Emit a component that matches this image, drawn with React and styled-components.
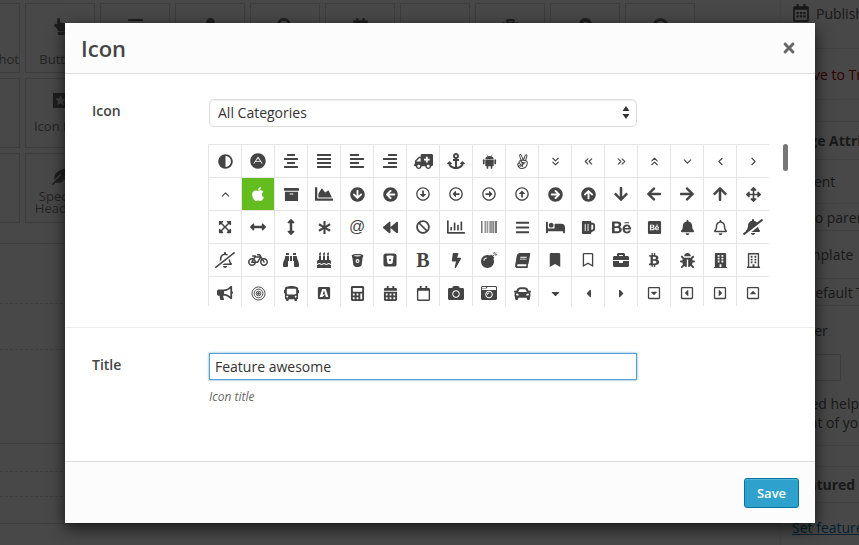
import React from "react";
import styled, { createGlobalStyle } from "styled-components";
import {
  FaAdjust, FaAdn, FaAlignCenter, FaAlignJustify, FaAlignLeft, FaAlignRight, FaAmbulance, FaAnchor,
  FaAngellist, FaApple, FaArchive, FaChartArea, FaArrowCircleDown, FaArrowCircleLeft,
  FaRegArrowAltCircleDown, FaRegArrowAltCircleLeft, FaRegArrowAltCircleRight, FaRegArrowAltCircleUp,
  FaArrowCircleRight, FaArrowCircleUp, FaArrowDown, FaArrowLeft, FaArrowRight, FaArrowUp, FaArrowsAlt,
  FaExpandArrowsAlt, FaArrowsAltH, FaArrowsAltV, FaAsterisk, FaBackward, FaBan, FaRegChartBar,
  FaBarcode, FaBars, FaBed, FaBeer, FaBehance, FaBehanceSquare, FaBell, FaRegBell, FaBellSlash,
  FaRegBellSlash, FaBicycle, FaBinoculars, FaBirthdayCake, FaBolt, FaBomb, FaBook, FaBookmark,
  FaRegBookmark, FaBriefcase, FaBtc, FaBug, FaBuilding, FaRegBuilding, FaBullhorn, FaBus,
  FaBuysellads, FaCalculator, FaCalendarAlt, FaRegCalendar, FaCamera, FaCameraRetro, FaCar, FaCaretDown,
  FaCaretLeft, FaCaretRight, FaRegCaretSquareDown, FaRegCaretSquareLeft, FaRegCaretSquareRight,
  FaRegCaretSquareUp, FaTimes, FaHandPointUp, FaFeatherAlt, FaSearch, FaUser, FaSuitcase,
  FaMapMarkerAlt, FaRegCalendarAlt, FaQuestionCircle,
} from "react-icons/fa";
import {
  FiChevronDown, FiChevronLeft, FiChevronRight, FiChevronUp, FiChevronsDown, FiChevronsLeft,
  FiChevronsRight, FiChevronsUp,
} from "react-icons/fi";

const Glyph = styled.span`
  font-family: ${(p) => p.$font};
  font-weight: ${(p) => p.$weight};
  font-size: ${(p) => p.$size}px;
  line-height: 1;
`;

const BoldGlyph = () => (
  <Glyph $font={'"Liberation Serif", serif'} $weight={700} $size={20}>B</Glyph>
);

const AtGlyph = () => (
  <Glyph $font={'"Liberation Sans", sans-serif'} $weight={400} $size={16}>@</Glyph>
);

const Android = ({ size }) => (
  <svg width={size} height={size} viewBox="0 0 16 16" fill="currentColor">
    <path d="M3.500 5.200C3.700 3.300 5.500 2 8 2s4.300 1.300 4.500 3.200z" />
    <path d="M5 .5l1.300 2M11 .5L9.700 2.500" stroke="currentColor" strokeWidth=".6" />
    <path d="M3.500 5.900h9v6.300c0 .5-.4.9-.9.9H11v2c0 1-1.700 1-1.700 0v-2H6.700v2c0 1-1.700 1-1.700 0v-2h-.6c-.5 0-.9-.4-.9-.9z" />
    <rect x="1" y="5.700" width="1.800" height="5.200" rx=".9" />
    <rect x="13.200" y="5.700" width="1.800" height="5.200" rx=".9" />
  </svg>
);

const Bullseye = ({ size }) => (
  <svg width={size} height={size} viewBox="0 0 16 16" fill="none" stroke="currentColor" strokeWidth="1">
    <circle cx="8" cy="8" r="7" />
    <circle cx="8" cy="8" r="4.700" />
    <circle cx="8" cy="8" r="2.500" />
    <circle cx="8" cy="8" r="1" fill="currentColor" />
  </svg>
);

const Bitbucket = ({ size }) => (
  <svg width={size} height={size} viewBox="0 0 16 16" fill="currentColor">
    <path d="M2 2.200C3.500.6 12.500.6 14 2.200c.4.5-.3 1.900-.6 3.300l-1 7.200c-.2 1.300-2.500 2.300-4.400 2.300s-4.200-1-4.400-2.300l-1-7.200C2.300 4.100 1.600 2.700 2 2.200zM4 3c1.500.8 6.500.8 8 0-1.500-.7-6.500-.7-8 0z" />
    <circle cx="8" cy="8.500" r="2.100" fill="#fff" />
    <circle cx="8" cy="8.500" r=".9" />
  </svg>
);

const BitbucketSquare = ({ size }) => (
  <svg width={size} height={size} viewBox="0 0 16 16" fill="currentColor">
    <rect x=".5" y=".5" width="15" height="15" rx="3" />
    <path d="M4 3.500c1.500-.8 6.500-.8 8 0l-1 8c-.2.800-1.500 1.200-3 1.200s-2.800-.4-3-1.200z" fill="#fff" />
    <circle cx="8" cy="8" r="1.200" />
  </svg>
);

const StarBox = ({ size }) => (
  <svg width={size} height={size} viewBox="0 0 16 16">
    <rect width="16" height="16" fill="currentColor" />
    <path d="M8 2.500l1.700 3.600 3.900.5-2.900 2.700.8 3.900L8 10.800l-3.500 1.900.8-3.900-2.900-2.700 3.900-.5z" fill="#ddd" />
  </svg>
);

const FLIP = "scaleX(-1)";

const ICONS = [
  [FaAdjust, 15], [FaAdn, 16], [FaAlignCenter, 16], [FaAlignJustify, 16], [FaAlignLeft, 16], [FaAlignRight, 16], [FaAmbulance, 19, FLIP], [FaAnchor, 18], [Android, 15], [FaAngellist, 15], [FiChevronsDown, 13], [FiChevronsLeft, 13], [FiChevronsRight, 13], [FiChevronsUp, 13], [FiChevronDown, 13], [FiChevronLeft, 13], [FiChevronRight, 13],
  [FiChevronUp, 13], [FaApple, 16], [FaArchive, 15], [FaChartArea, 18], [FaArrowCircleDown, 15], [FaArrowCircleLeft, 15], [FaRegArrowAltCircleDown, 14], [FaRegArrowAltCircleLeft, 14], [FaRegArrowAltCircleRight, 14], [FaRegArrowAltCircleUp, 14], [FaArrowCircleRight, 15], [FaArrowCircleUp, 15], [FaArrowDown, 16], [FaArrowLeft, 16], [FaArrowRight, 16], [FaArrowUp, 16], [FaArrowsAlt, 15],
  [FaExpandArrowsAlt, 14], [FaArrowsAltH, 16], [FaArrowsAltV, 16], [FaAsterisk, 13], [AtGlyph, 14], [FaBackward, 15], [FaBan, 14], [FaRegChartBar, 18], [FaBarcode, 16], [FaBars, 15], [FaBed, 19], [FaBeer, 15], [FaBehance, 19], [FaBehanceSquare, 15], [FaBell, 15], [FaRegBell, 15], [FaBellSlash, 20, FLIP],
  [FaRegBellSlash, 20, FLIP], [FaBicycle, 20], [FaBinoculars, 16], [FaBirthdayCake, 16], [Bitbucket, 15], [BitbucketSquare, 14], [BoldGlyph, 14], [FaBolt, 15], [FaBomb, 16], [FaBook, 15, "skewX(-10deg)"], [FaBookmark, 14], [FaRegBookmark, 14], [FaBriefcase, 16], [FaBtc, 14], [FaBug, 15], [FaBuilding, 15], [FaRegBuilding, 15],
  [FaBullhorn, 16], [Bullseye, 15], [FaBus, 15], [FaBuysellads, 14], [FaCalculator, 15], [FaCalendarAlt, 15], [FaRegCalendar, 15], [FaCamera, 16], [FaCameraRetro, 16], [FaCar, 17], [FaCaretDown, 13], [FaCaretLeft, 13], [FaCaretRight, 13], [FaRegCaretSquareDown, 14], [FaRegCaretSquareLeft, 14], [FaRegCaretSquareRight, 14], [FaRegCaretSquareUp, 14],
];

const TILE_ROWS = [
  {
    gap: 18,
    tiles: [
      { name: "Screenshot", nudge: 16 }, { Icon: FaHandPointUp, name: "Button" }, { Icon: FaAlignJustify },
      { Icon: FaUser }, { Icon: FaSearch }, { Icon: FaRegCalendarAlt },
      {}, { Icon: FaSuitcase }, { Icon: FaMapMarkerAlt }, { Icon: FaQuestionCircle },
    ],
  },
  { gap: 12, tiles: [{}, { Icon: StarBox, name: "Icon Box", size: 15 }] },
  { gap: 5, tiles: [{}, { Icon: FaFeatherAlt, name: "Special Heading" }] },
];

const BANDS = [
  { h: 20, line: "solid" }, { h: 59, line: "dashed" }, { h: 45, line: "dashed" }, { h: 93, line: "solid" },
  { h: 27, line: "dashed" }, { h: 24, line: "dashed" }, { h: 26, line: "solid" },
];

const GlobalStyle = createGlobalStyle`
  html, body {
    margin: 0;
    height: 100%;
    overflow: hidden;
    background: #f1f1f1;
    font-family: "Open Sans", "Liberation Sans", sans-serif;
  }
`;

const Page = styled.div`
  position: relative;
  width: 859px;
  height: 545px;
  overflow: hidden;
  display: flex;
`;

const Main = styled.main`
  flex: 1;
  min-width: 0;
  overflow: hidden;
`;

const TileRows = styled.div`
  display: flex;
  flex-direction: column;
  gap: 5px;
  margin: 3px 0 0 -50px;
`;

const TileRow = styled.div`
  display: flex;
  gap: 5px;
`;

const Tile = styled.div`
  width: 70px;
  height: 70px;
  flex: none;
  box-sizing: border-box;
  border: 1px solid #ccc;
  padding: 14px ${(p) => p.$nudge || 0}px 0 0;
  text-align: center;
  font-size: 13px;
  line-height: 12px;
  color: #777;
  svg {
    display: block;
    margin: 0 auto ${(p) => p.$gap}px;
    color: #666;
  }
`;

const TileSpacer = styled.div`
  height: 17px;
  margin-bottom: ${(p) => p.$gap}px;
`;

const Band = styled.div`
  height: ${(p) => p.$h}px;
  border-bottom: 1px ${(p) => p.$line} #ccc;
`;

const Sidebar = styled.aside`
  width: 79px;
  flex: none;
  box-sizing: border-box;
  border-left: 1px solid #e5e5e5;
  font-size: 14px;
  line-height: 19px;
  white-space: nowrap;
  overflow: hidden;
  color: #555;
`;

const SideRow = styled.div`
  height: ${(p) => p.$h}px;
  padding-left: ${(p) => p.$indent || 11}px;
  display: flex;
  align-items: ${(p) => (p.$top ? "flex-start" : "center")};
  gap: 6px;
  box-sizing: border-box;
  border-bottom: ${(p) => (p.$line ? "1px solid #ddd" : "none")};
  font-weight: ${(p) => (p.$bold ? 700 : 400)};
  color: ${(p) => p.$color || "inherit"};
  text-decoration: ${(p) => (p.$link ? "underline" : "none")};
  svg {
    flex: none;
  }
`;

const OrderBox = styled.div`
  width: 49px;
  height: 27px;
  border: 1px solid #ccc;
  box-sizing: border-box;
`;

const Overlay = styled.div`
  position: absolute;
  inset: 0;
  background: rgba(0, 0, 0, 0.7);
`;

const Modal = styled.div`
  position: absolute;
  left: 65px;
  top: 23px;
  width: 750px;
  height: 500px;
  display: flex;
  flex-direction: column;
  background: #fff;
  box-shadow: 0 5px 15px rgba(0, 0, 0, 0.7);
`;

const Header = styled.header`
  height: 50px;
  flex: none;
  padding: 0 18px 0 16px;
  display: flex;
  align-items: center;
  justify-content: space-between;
  background: #fcfcfc;
  border-bottom: 1px solid #ddd;
`;

const Title = styled.h1`
  margin: 0;
  font-size: 22px;
  line-height: 50px;
  font-weight: 600;
  color: #444;
`;

const CloseButton = styled.button`
  padding: 0;
  border: 0;
  background: none;
  color: #666;
  display: flex;
`;

const FormRow = styled.section`
  height: ${(p) => p.$h}px;
  flex: none;
  box-sizing: border-box;
  padding: 25px 0 0 27px;
  display: grid;
  grid-template-columns: 117px 1fr;
  border-bottom: ${(p) => (p.$line ? "1px solid #eee" : "none")};
`;

const Label = styled.label`
  font-size: 14px;
  line-height: 24px;
  font-weight: 600;
  color: #444;
`;

const SelectWrap = styled.div`
  position: relative;
  width: 428px;
  height: 28px;
`;

const Select = styled.select`
  appearance: none;
  width: 100%;
  height: 100%;
  padding: 0 8px 2px;
  box-sizing: border-box;
  border: 1px solid #ddd;
  border-radius: 5px;
  box-shadow: inset 0 1px 2px rgba(0, 0, 0, 0.07);
  background: #fff;
  font: 14px "Open Sans", sans-serif;
  color: #333;
`;

const SelectArrows = styled.svg`
  position: absolute;
  right: 7px;
  top: 7px;
  pointer-events: none;
`;

const ListWrap = styled.div`
  position: relative;
  width: 561px;
  margin-top: 17px;
  margin-left: -1px;
`;

const IconList = styled.div`
  height: 162px;
  overflow: hidden;
`;

const IconGrid = styled.div`
  display: grid;
  grid-template-columns: repeat(17, 33px);
  grid-auto-rows: 33px;
  border-left: 1px solid #e5e5e5;
  border-top: 1px solid #e5e5e5;
`;

const IconCell = styled.div`
  display: flex;
  align-items: center;
  justify-content: center;
  box-sizing: border-box;
  border-right: 1px solid #e5e5e5;
  border-bottom: 1px solid #e5e5e5;
  color: ${(p) => (p.$selected ? "#fff" : "#444")};
  background: ${(p) => (p.$selected ? "#64bd1e" : "#fff")};
  svg {
    transform: ${(p) => p.$tf || "none"};
  }
`;

const ScrollThumb = styled.div`
  position: absolute;
  left: 575px;
  top: 0;
  width: 5px;
  height: 27px;
  border-radius: 3px;
  background: #777;
`;

const TextInput = styled.input`
  display: block;
  width: 428px;
  height: 27px;
  padding: 0 5px;
  box-sizing: border-box;
  border: 1px solid #5b9dd9;
  box-shadow: 0 0 2px rgba(30, 140, 190, 0.8);
  outline: none;
  font: 14px "Open Sans", sans-serif;
  color: #333;
`;

const Hint = styled.p`
  margin: 8px 0 0;
  font-size: 12px;
  line-height: 17px;
  font-style: italic;
  color: #666;
`;

const Footer = styled.footer`
  flex: 1;
  padding: 0 16px;
  display: flex;
  align-items: center;
  justify-content: flex-end;
  background: #fcfcfc;
  border-top: 1px solid #ddd;
`;

const SaveButton = styled.button`
  width: 55px;
  height: 30px;
  padding: 0;
  border: 1px solid #0074a2;
  border-radius: 3px;
  background: #2ea2cc;
  box-shadow: inset 0 1px 0 rgba(120, 200, 230, 0.5);
  color: #fff;
  font: 600 13px "Open Sans", sans-serif;
`;

export default function App() {
  return (
    <Page>
      <GlobalStyle />
      <Main>
        <TileRows>
          {TILE_ROWS.map((row, r) => (
            <TileRow key={r}>
              {row.tiles.map(({ Icon, name, size, nudge }, i) => (
                <Tile key={i} $gap={row.gap} $nudge={nudge}>
                  {Icon ? <Icon size={size || 17} /> : <TileSpacer $gap={row.gap} />}
                  {name}
                </Tile>
              ))}
            </TileRow>
          ))}
        </TileRows>
        {BANDS.map((b, i) => (
          <Band key={i} $h={b.h} $line={b.line} />
        ))}
      </Main>
      <Sidebar>
        <SideRow $h={26}>
          <FaRegCalendarAlt size={18} />
          Publish
        </SideRow>
        <SideRow $h={23} $line />
        <SideRow $h={51} $line $color="#a00">Move to Trash</SideRow>
        <SideRow $h={22} $line />
        <SideRow $h={38} $line $bold>Page Attributes</SideRow>
        <SideRow $h={44} $line>Parent</SideRow>
        <SideRow $h={27} $line $indent={21}>(no parent)</SideRow>
        <SideRow $h={48} $line>Template</SideRow>
        <SideRow $h={27} $line $indent={24}>Default Template</SideRow>
        <SideRow $h={48} $indent={8}>Order</SideRow>
        <SideRow $h={39} $top><OrderBox /></SideRow>
        <SideRow $h={20}>Need help? Use the Help tab</SideRow>
        <SideRow $h={33} $line $top>right of your screen.</SideRow>
        <SideRow $h={21} $line />
        <SideRow $h={36} $line $bold>Featured Image</SideRow>
        <SideRow $h={48} $link $color="#0074a2">Set featured image</SideRow>
      </Sidebar>
      <Overlay />
      <Modal>
        <Header>
          <Title>Icon</Title>
          <CloseButton aria-label="Close">
            <FaTimes size={16} />
          </CloseButton>
        </Header>
        <FormRow $h={254} $line>
          <Label>Icon</Label>
          <div>
            <SelectWrap>
              <Select defaultValue="all">
                <option value="all">All Categories</option>
              </Select>
              <SelectArrows width="8" height="13" viewBox="0 0 8 13" fill="#333">
                <path d="M4 0l3.500 5h-7zM4 13L.5 8h7z" />
              </SelectArrows>
            </SelectWrap>
            <ListWrap>
              <IconList>
                <IconGrid>
                  {ICONS.map(([Icon, size, tf], i) => (
                    <IconCell key={i} $selected={Icon === FaApple} $tf={tf}>
                      <Icon size={size} />
                    </IconCell>
                  ))}
                </IconGrid>
              </IconList>
              <ScrollThumb />
            </ListWrap>
          </div>
        </FormRow>
        <FormRow $h={133}>
          <Label>Title</Label>
          <div>
            <TextInput defaultValue="Feature awesome" />
            <Hint>Icon title</Hint>
          </div>
        </FormRow>
        <Footer>
          <SaveButton>Save</SaveButton>
        </Footer>
      </Modal>
    </Page>
  );
}
